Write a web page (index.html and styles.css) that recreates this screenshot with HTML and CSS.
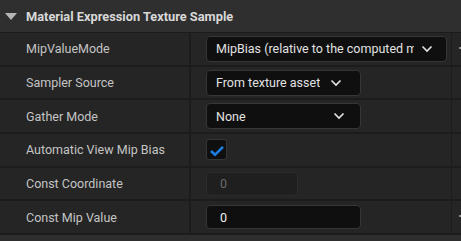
FILE: index.html
```html
<!DOCTYPE html>
<html lang="en">
<head>
  <meta charset="UTF-8">
  <title>Material Expression Texture Sample</title>
  <link rel="stylesheet" href="styles.css">
</head>
<body>

  <div class="panel">
    <div class="section-head">
      <span class="caret"></span>
      Material Expression Texture Sample
    </div>

    <div class="row">
      <div class="name">MipValueMode</div>
      <div class="value">
        <div class="combo wide">
          <span class="combo-text">MipBias (relative to the computed mip level)</span>
          <svg class="chev" width="12" height="8" viewBox="0 0 12 8"><path d="M1.5 1.5 L6 6 L10.5 1.5" fill="none" stroke="#e6e6e6" stroke-width="1.6"/></svg>
        </div>
      </div>
      <div class="reset"><span class="reset-mark"></span></div>
    </div>

    <div class="row">
      <div class="name">Sampler Source</div>
      <div class="value">
        <div class="combo fit">
          <span class="combo-text">From texture asset</span>
          <svg class="chev" width="12" height="8" viewBox="0 0 12 8"><path d="M1.5 1.5 L6 6 L10.5 1.5" fill="none" stroke="#e6e6e6" stroke-width="1.6"/></svg>
        </div>
      </div>
      <div class="reset"></div>
    </div>

    <div class="row">
      <div class="name">Gather Mode</div>
      <div class="value">
        <div class="combo mid">
          <span class="combo-text">None</span>
          <svg class="chev" width="12" height="8" viewBox="0 0 12 8"><path d="M1.5 1.5 L6 6 L10.5 1.5" fill="none" stroke="#e6e6e6" stroke-width="1.6"/></svg>
        </div>
      </div>
      <div class="reset"></div>
    </div>

    <div class="row">
      <div class="name">Automatic View Mip Bias</div>
      <div class="value">
        <div class="checkbox">
          <svg width="14" height="12" viewBox="0 0 14 12"><path d="M1 6 L5 9.8 L13 1.8" fill="none" stroke="#1c7fe6" stroke-width="2.6"/></svg>
        </div>
      </div>
      <div class="reset"></div>
    </div>

    <div class="row">
      <div class="name">Const Coordinate</div>
      <div class="value">
        <div class="field disabled">0</div>
      </div>
      <div class="reset"></div>
    </div>

    <div class="row">
      <div class="name">Const Mip Value</div>
      <div class="value">
        <div class="field">0</div>
      </div>
      <div class="reset"><span class="reset-mark"></span></div>
    </div>

    <div class="footer"></div>
  </div>

</body>
</html>
```

FILE: styles.css
```css
body {
  margin: 0;
  background: #242424;
  font-family: Roboto, "Noto Sans", sans-serif;
  font-size: 12px;
  color: #c4c4c4;
  overflow: hidden;
}
.panel {
  width: 461px;
  height: 241px;
  overflow: hidden;
}
.section-head {
  height: 32px;
  background: #2f2f2f;
  border-bottom: 1px solid #1b1b1b;
  display: flex;
  align-items: center;
  font-weight: bold;
  color: #d8d8d8;
  font-size: 12.8px;
}
.caret {
  width: 0;
  height: 0;
  border-left: 6px solid transparent;
  border-right: 6px solid transparent;
  border-top: 7px solid #b5b5b5;
  margin: 1px 9px 0 5px;
}
.row {
  display: grid;
  grid-template-columns: 191px 261px 9px;
  height: 31.7px;
  border-bottom: 2px solid #1c1c1c;
  background: #252525;
}
.name {
  display: flex;
  align-items: center;
  padding-left: 26px;
  border-right: 2px solid #1c1c1c;
  white-space: nowrap;
  font-size: 12.5px;
}
.value {
  display: flex;
  align-items: center;
  padding-left: 15px;
  border-right: 1px solid #1c1c1c;
  min-width: 0;
}
.reset {
  position: relative;
}
.reset-mark {
  position: absolute;
  left: 7px;
  top: 14px;
  width: 4px;
  height: 2px;
  background: #8a8a8a;
}
.combo {
  height: 26px;
  box-sizing: border-box;
  background: #0f0f0f;
  border: 1px solid #363636;
  border-radius: 4px;
  display: flex;
  align-items: center;
  padding: 0 0 0 9px;
  color: #e2e2e2;
  font-size: 12.5px;
}
.combo-text {
  white-space: nowrap;
  overflow: hidden;
}
.combo.wide {
  width: 241px;
}
.combo.wide .combo-text {
  width: 198px;
  flex: none;
}
.combo.wide .chev {
  margin-left: 7px;
}
.combo.fit {
  width: 155px;
}
.combo.mid {
  width: 155px;
}
.combo.mid .combo-text {
  flex: 1;
}
.chev {
  flex: none;
  margin-left: 10px;
}
.combo.mid .chev {
  margin-right: 15px;
}
.checkbox {
  width: 21px;
  height: 21px;
  box-sizing: border-box;
  background: #0f0f0f;
  border: 1px solid #363636;
  border-radius: 3px;
  display: flex;
  align-items: center;
  justify-content: center;
  padding-top: 2px;
}
.field {
  width: 155px;
  height: 24px;
  box-sizing: border-box;
  background: #0f0f0f;
  border: 1px solid #363636;
  border-radius: 4px;
  display: flex;
  align-items: center;
  padding-left: 13px;
  color: #f0f0f0;
  font-size: 12.5px;
}
.field.disabled {
  width: 92px;
  background: #1f1f1f;
  border-color: #2c2c2c;
  color: #6a6a6a;
}
.footer {
  height: 8px;
  background: #2e2e2e;
}
```
